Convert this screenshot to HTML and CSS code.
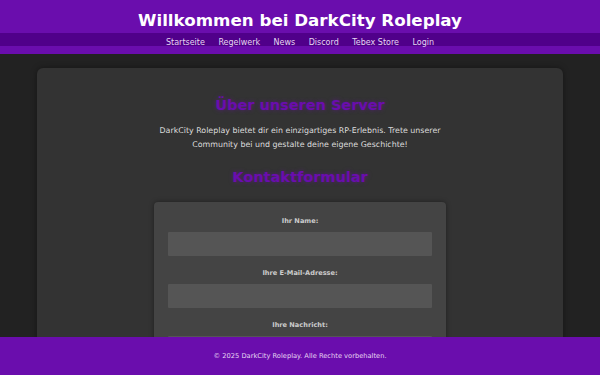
FILE: index.html
```html
<!DOCTYPE html>
<html lang="de">
<head>
  <meta charset="UTF-8">
  <title>DarkCity Roleplay</title>
  <link rel="stylesheet" href="styles.css">
</head>
<body>

  <header>
    <h1>Willkommen bei DarkCity Roleplay</h1>
    <nav>
      <a href="index.html">Startseite</a>
      <a href="regelwerk.html">Regelwerk</a>
      <a href="news.html">News</a>
      <a href="discord.html">Discord</a>
      <a href="store.html">Tebex Store</a>
      <a href="login.html">Login</a>
    </nav>
  </header>

  <main class="container">
    <h2>Über unseren Server</h2>
    <p>DarkCity Roleplay bietet dir ein einzigartiges RP-Erlebnis. Trete unserer Community bei und gestalte deine eigene Geschichte!</p>

    <h2>Kontaktformular</h2>
    <form class="contact-form">
      <label for="name">Ihr Name:</label>
      <input type="text" id="name">
      <label for="email">Ihre E-Mail-Adresse:</label>
      <input type="email" id="email">
      <label for="message">Ihre Nachricht:</label>
      <textarea id="message"></textarea>
    </form>
  </main>

  <footer>
    <p>&copy; 2025 DarkCity Roleplay. Alle Rechte vorbehalten.</p>
  </footer>

</body>
</html>
```

FILE: styles.css
```css
body {
  font-family: "DejaVu Sans", sans-serif;
  background-color: #222;
  color: #ddd;
  margin: 0;
  padding: 0;
}
header {
  background-color: #6a0dad;
  color: white;
  text-align: center;
  padding: 10px 0 8px 0;
}
header h1 {
  margin: 0 0 3px 0;
  font-size: 16.7px;
  line-height: 20px;
}
nav {
  background-color: #50008a;
  height: 13px;
  line-height: 13px;
}
nav a {
  color: #e6d6f2;
  text-decoration: none;
  margin: 0 4.2px;
  font-size: 8px;
}
.container {
  background-color: #333;
  width: 526px;
  margin: 14px auto 0 auto;
  padding: 27px 0 40px 0;
  border-radius: 6px;
  box-shadow: 0 0 6px rgba(0, 0, 0, 0.4);
  text-align: center;
  box-sizing: border-box;
}
.container h2 {
  color: #6a0dad;
  font-size: 14.5px;
  margin: 0;
  line-height: 20px;
  text-shadow: 0 0 4px rgba(106, 13, 173, 0.6);
}
.container p {
  font-size: 7.9px;
  line-height: 14px;
  width: 300px;
  margin: 9px auto 15px auto;
}
.contact-form {
  background-color: #444;
  width: 292px;
  margin: 15px auto 0 auto;
  padding: 14px 14px;
  border-radius: 4px;
  box-shadow: 0 0 5px rgba(0, 0, 0, 0.4);
  box-sizing: border-box;
  display: flex;
  flex-direction: column;
}
.contact-form label {
  color: #ccc;
  font-size: 6.6px;
  font-weight: bold;
  line-height: 11px;
  margin: 0 0 5px 0;
}
.contact-form input,
.contact-form textarea {
  background-color: #555;
  border: none;
  border-radius: 1px;
  box-sizing: border-box;
  height: 24px;
  margin: 0 0 12px 0;
}
.contact-form textarea {
  height: 60px;
}
footer {
  position: fixed;
  bottom: 0;
  left: 0;
  width: 100%;
  height: 38px;
  background-color: #6a0dad;
  color: #e6d6f2;
  text-align: center;
}
footer p {
  margin: 0;
  font-size: 6.7px;
  line-height: 38px;
}
```
